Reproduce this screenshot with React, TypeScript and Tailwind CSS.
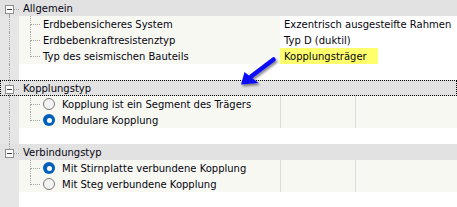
import React from 'react';

const dot = 'border-dotted border-[#a3a3a3]';

// left gray strip with the root-level tree line
const Strip = ({ kind }: { kind: 'line' | 'none' | 'box-first' | 'box' | 'box-last' }) => {
    if (kind === 'line' || kind === 'none') {
        return (
            <div className="w-[19px] shrink-0 h-full bg-[#e6e6e6]">
                {kind === 'line' && <div className={`ml-[9px] h-full border-l ${dot}`} />}
            </div>
        );
    }
    return (
        <div className="w-[19px] shrink-0 h-full flex flex-col pl-[5px]">
            <div className={`h-[5px] ml-[4px] ${kind === 'box-first' ? '' : `border-l ${dot}`}`} />
            <div className="flex items-center">
                <div className="w-[9px] h-[9px] border border-[#8e8e8e] bg-[#fbfbfb] flex items-center justify-center">
                    <div className="w-[5px] h-px bg-[#404040]" />
                </div>
                <div className={`w-[5px] border-t ${dot}`} />
            </div>
            <div className={`flex-1 ml-[4px] ${kind === 'box-last' ? '' : `border-l ${dot}`}`} />
        </div>
    );
};

const Branch = ({ last }: { last?: boolean }) => (
    <div className="w-[24px] shrink-0 h-full flex flex-col pl-[11px]">
        <div className={`h-[9px] w-[10px] border-l border-b ${dot}`} />
        <div className={`flex-1 ${last ? '' : `border-l ${dot}`}`} />
    </div>
);

const Header = ({ title, kind, focused }: { title: string; kind: 'box-first' | 'box' | 'box-last'; focused?: boolean }) => (
    <div
        className={`h-4 flex bg-[#e2e2e2] ${focused ? 'outline-1 outline-dotted outline-black -outline-offset-1' : ''}`}
    >
        <Strip kind={kind} />
        <div className="pl-[4px] h-4 pt-px leading-4">{title}</div>
    </div>
);

const Gap = ({ line }: { line?: boolean }) => (
    <div className="h-4 flex">
        <Strip kind={line ? 'line' : 'none'} />
    </div>
);

const PropRow = ({ label, value, last, mark }: { label: string; value: string; last?: boolean; mark?: boolean }) => (
    <div className="h-4 flex">
        <Strip kind="line" />
        <div className="w-[261px] flex bg-[#f8f8f3]">
            <Branch last={last} />
            <div className="pt-px leading-4 whitespace-nowrap">{label}</div>
        </div>
        <div className="flex-1 bg-white">
            <div className={`h-4 pl-[4px] pt-px leading-4 whitespace-nowrap ${mark ? 'w-[98px] bg-[#ffff6e]' : ''}`}>
                {value}
            </div>
        </div>
    </div>
);

const Radio = ({ checked }: { checked?: boolean }) =>
    checked ? (
        <div className="w-[12px] h-[12px] rounded-full bg-[#005fb8] flex items-center justify-center">
            <div className="w-[5px] h-[5px] rounded-full bg-white" />
        </div>
    ) : (
        <div className="w-[12px] h-[12px] rounded-full border border-[#7a7a7a] bg-[#f3f3f3]" />
    );

const RadioRow = ({ label, checked, last, strip }: { label: string; checked?: boolean; last?: boolean; strip: 'line' | 'none' }) => (
    <div className="h-4 flex">
        <Strip kind={strip} />
        <div className="flex-1 flex bg-[#f8f8f3]">
            <div className="w-[261px] flex">
                <Branch last={last} />
                <div className="h-4 flex items-center">
                    <Radio checked={checked} />
                </div>
                <div className="pl-[7px] pt-px leading-4 whitespace-nowrap">{label}</div>
            </div>
            <div className="w-[75px] border-l border-[#dcdcdc]" />
            <div className="flex-1 border-l border-[#dcdcdc]" />
        </div>
    </div>
);

export default function App() {
    return (
        <div className="w-[457px] h-[207px] bg-white relative overflow-hidden flex flex-col font-['DejaVu_Sans',sans-serif] text-[10px] text-[#050510]">
            <Header title="Allgemein" kind="box-first" />
            <PropRow label="Erdbebensicheres System" value="Exzentrisch ausgesteifte Rahmen" />
            <PropRow label="Erdbebenkraftresistenztyp" value="Typ D (duktil)" />
            <PropRow label="Typ des seismischen Bauteils" value="Kopplungsträger" last mark />
            <Gap line />
            <Header title="Kopplungstyp" kind="box" focused />
            <RadioRow label="Kopplung ist ein Segment des Trägers" strip="line" />
            <RadioRow label="Modulare Kopplung" checked last strip="line" />
            <Gap line />
            <Header title="Verbindungstyp" kind="box-last" />
            <RadioRow label="Mit Stirnplatte verbundene Kopplung" checked strip="none" />
            <RadioRow label="Mit Steg verbundene Kopplung" last strip="none" />
            <div className="flex-1 flex">
                <Strip kind="none" />
            </div>

            {/* blue pointer arrow */}
            <svg className="absolute left-[232px] top-[52px]" width="50" height="40" viewBox="232 52 50 40">
                <defs>
                    <filter id="sh" x="-30%" y="-30%" width="160%" height="160%">
                        <feDropShadow dx="1.5" dy="2" stdDeviation="1.2" floodColor="#000" floodOpacity="0.45" />
                    </filter>
                </defs>
                <g filter="url(#sh)">
                    <line x1="273.5" y1="59.5" x2="251" y2="76.5" stroke="#0d0df5" strokeWidth="4.5" strokeLinecap="round" />
                    <polygon points="241,84.5 244.5,72 258.5,83" fill="#0d0df5" />
                </g>
            </svg>
        </div>
    );
}
